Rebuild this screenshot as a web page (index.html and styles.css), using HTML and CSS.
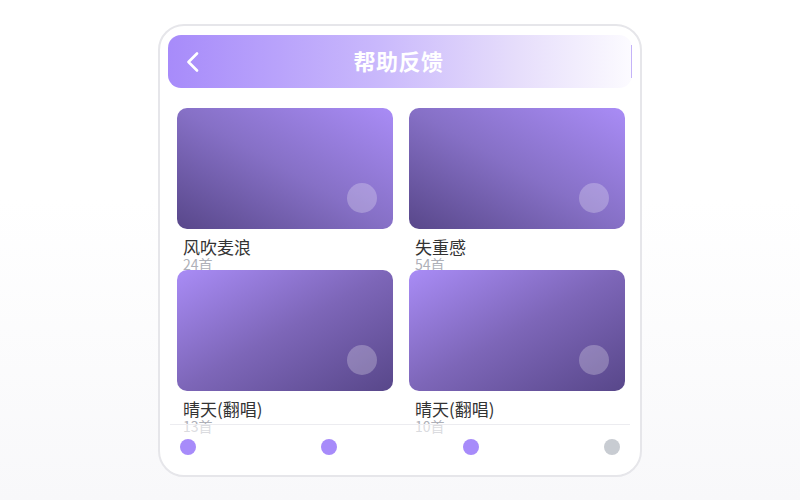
FILE: index.html
```html
<!DOCTYPE html>
<html lang="zh">
<head>
<meta charset="utf-8">
<link rel="stylesheet" href="styles.css">
</head>
<body>
<div class="phone">
  <header class="topbar">
    <span class="back">
      <svg width="14" height="20" viewBox="0 0 14 20"><polyline points="11,1.5 2.5,10 11,18.5" fill="none" stroke="#fff" stroke-width="2.6" stroke-linecap="round" stroke-linejoin="round"/></svg>
    </span>
    <h1 class="title">帮助反馈</h1>
    <span class="edge"></span>
  </header>
  <main class="grid">
    <div class="card">
      <div class="cover cover-a"><span class="play"></span></div>
      <div class="name">风吹麦浪</div>
      <div class="count">24首</div>
    </div>
    <div class="card">
      <div class="cover cover-a"><span class="play"></span></div>
      <div class="name">失重感</div>
      <div class="count">54首</div>
    </div>
    <div class="card">
      <div class="cover cover-b"><span class="play"></span></div>
      <div class="name">晴天(翻唱)</div>
      <div class="count">13首</div>
    </div>
    <div class="card">
      <div class="cover cover-b"><span class="play"></span></div>
      <div class="name">晴天(翻唱)</div>
      <div class="count">10首</div>
    </div>
  </main>
  <nav class="tabbar">
    <span class="dot"></span>
    <span class="dot"></span>
    <span class="dot"></span>
    <span class="dot dot-off"></span>
  </nav>
</div>
</body>
</html>
```
FILE: styles.css
```css
* { box-sizing: border-box; }
html, body { margin: 0; padding: 0; }
body {
  width: 800px;
  height: 500px;
  background: linear-gradient(180deg, #ffffff 0%, #ffffff 40%, #f8f8fa 100%);
  font-family: "Noto Sans CJK SC", "Noto Sans", sans-serif;
  padding-top: 24px;
  overflow: hidden;
}
.phone {
  position: relative;
  width: 484px;
  height: 453px;
  margin: 0 auto;
  border: 2px solid #e6e6ea;
  border-radius: 26px;
  background: #fff;
  overflow: hidden;
}
.topbar {
  display: flex;
  align-items: center;
  height: 53px;
  margin: 9px 8px 0 8px;
  padding: 0 0 0 18px;
  border-radius: 13px;
  background: linear-gradient(90deg, #a78bfa 0%, #c9b8fc 45%, #e6ddfb 75%, #fcfbff 100%);
}
.back { width: 14px; height: 20px; display: flex; }
.title {
  flex: 1;
  margin: 0 14px 0 -14px;
  padding: 0 6px 3px 0;
  text-align: center;
  color: #fff;
  font-size: 22px;
  line-height: 28px;
  font-weight: 700;
  letter-spacing: 0.5px;
}
.edge {
  width: 1px;
  height: 33px;
  background: #c4b3f8;
}
.grid {
  display: grid;
  grid-template-columns: 216px 216px;
  grid-auto-rows: 162px;
  column-gap: 16px;
  padding: 20px 15px 0 17px;
}
.card { min-width: 0; }
.cover {
  position: relative;
  height: 121px;
  border-radius: 10px;
  display: flex;
  align-items: flex-end;
  justify-content: flex-end;
  padding: 0 16px 16px 0;
}
.cover-a { background: linear-gradient(to bottom left, #a98cf6 0%, #8670c6 50%, #58478a 100%); }
.cover-b { background: linear-gradient(to bottom right, #a98cf6 0%, #7d66b8 50%, #58478a 100%); }
.play {
  width: 30px;
  height: 30px;
  border-radius: 50%;
  background: rgba(255, 255, 255, 0.25);
}
.name {
  margin: 9px 0 0 6px;
  font-size: 17px;
  line-height: 18px;
  color: #333;
  white-space: nowrap;
}
.count {
  margin: 0 0 0 6px;
  font-size: 14px;
  line-height: 16px;
  color: #aeb0b8;
}
.tabbar {
  position: absolute;
  left: 10px;
  right: 10px;
  bottom: 0;
  height: 51px;
  display: flex;
  justify-content: space-between;
  align-items: flex-start;
  padding: 14px 10px 0 10px;
  border-top: 1px solid #ececf0;
  background: rgba(255, 255, 255, 0.55);
}
.dot {
  width: 16px;
  height: 16px;
  border-radius: 50%;
  background: #a78bfa;
}
.dot-off { background: #c8ccd2; }
```
